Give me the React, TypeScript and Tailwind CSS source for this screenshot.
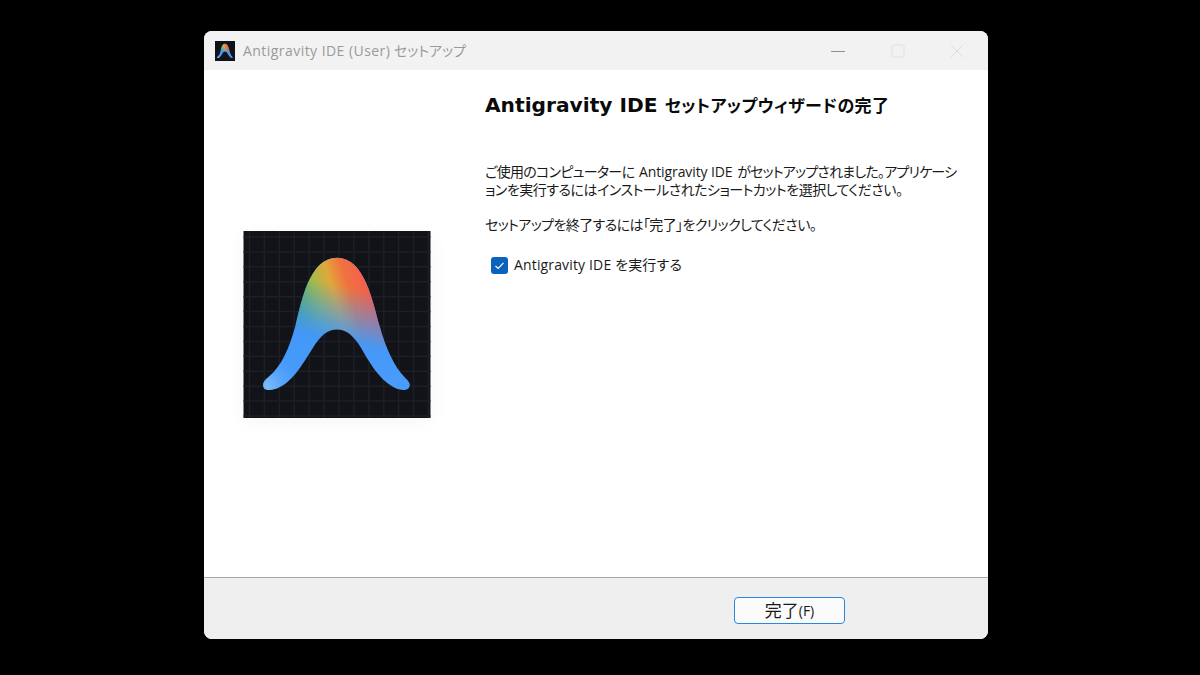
import React from "react";

const CJK = "font-['Open_Sans','Noto_Sans_CJK_JP',sans-serif] [font-feature-settings:'palt']";
const A = "M20.6 158C18 153 22 149 26 146C38 136 46 118 52 96C58 72 66 27 94 27C122 27 130 72 137 96C143 118 152 137 162 147C166 151 169 154 166 158C163 161 157 160 151 157C136 149 126 131 118 117C111 106 104 99 94 99C84 99 77 106 70 117C61 131 51 150 36 157C30 160 23 161 20.6 158Z";

function Mark({ id, grid }: { id: string; grid: boolean }) {
  const lines = [];
  if (grid) {
    for (let i = 0; i < 13; i++) {
      const p = 6 + i * 15;
      lines.push(<path key={"v" + i} d={`M${p} 0V188`} stroke="#1d1f25" strokeWidth="1.5" />);
      lines.push(<path key={"h" + i} d={`M0 ${p}H188`} stroke="#1d1f25" strokeWidth="1.5" />);
    }
  }
  return (
    <svg viewBox="0 0 188 188" className="block w-full h-full">
      <defs>
        <linearGradient id={id + "b"} x1="0" y1="0" x2="0" y2="1">
          <stop offset="0" stopColor="#3a92f2" />
          <stop offset="1" stopColor="#4a9cfb" />
        </linearGradient>
        <linearGradient id={id + "h"} gradientUnits="userSpaceOnUse" x1="52" y1="68" x2="136" y2="42">
          <stop offset="0" stopColor="#4fae66" />
          <stop offset="0.24" stopColor="#a0bb48" />
          <stop offset="0.44" stopColor="#e0a83c" />
          <stop offset="0.62" stopColor="#f0723f" />
          <stop offset="0.82" stopColor="#f4604c" />
          <stop offset="1" stopColor="#e85f6c" />
        </linearGradient>
        <linearGradient id={id + "f"} gradientUnits="userSpaceOnUse" x1="106" y1="32" x2="90" y2="110">
          <stop offset="0" stopColor="#ffffff" />
          <stop offset="0.3" stopColor="#ffffff" />
          <stop offset="1" stopColor="#000000" />
        </linearGradient>
        <mask id={id + "m"} maskUnits="userSpaceOnUse" x="0" y="0" width="188" height="188">
          <rect width="188" height="188" fill={`url(#${id}f)`} />
        </mask>
        <radialGradient id={id + "l"} gradientUnits="userSpaceOnUse" cx="24" cy="156" r="34">
          <stop offset="0" stopColor="#7fbdfb" />
          <stop offset="1" stopColor="#4a9cfb" stopOpacity="0" />
        </radialGradient>
      </defs>
      <rect width="188" height="188" fill="#121318" />
      {lines}
      <path d={A} fill={`url(#${id}b)`} />
      <path d={A} fill={`url(#${id}h)`} mask={`url(#${id}m)`} />
      <path d={A} fill={`url(#${id}l)`} />
    </svg>
  );
}

export default function App() {
  return (
    <div className="w-[1200px] h-[675px] bg-black flex pt-[31px] pl-[204px]">
      <div className={`w-[784px] h-[608px] rounded-[8px] overflow-hidden flex flex-col bg-white ${CJK}`}>
        <div className="h-[39px] bg-[#f2f2f2] flex items-center pl-[11px] shrink-0">
          <div className="w-[20px] h-[20px] shrink-0"><Mark id="s" grid={false} /></div>
          <span className="ml-[8px] text-[14px] text-[#9a9a9a] whitespace-nowrap">
            <span className="tracking-[0.45px]">Antigravity IDE (User)</span> セットアップ
          </span>
          <div className="ml-auto flex items-center pr-[24px] gap-[45.5px]">
            <svg width="14" height="14" viewBox="0 0 14 14"><path d="M0 7.5H14" stroke="#8e8e8e" strokeWidth="1" /></svg>
            <svg width="14" height="14" viewBox="0 0 14 14"><rect x="1" y="1" width="12" height="12" rx="1.5" fill="none" stroke="#e0e0e0" strokeWidth="1" /></svg>
            <svg width="14" height="14" viewBox="0 0 14 14"><path d="M1 1L13 13M13 1L1 13" stroke="#dedede" strokeWidth="1" /></svg>
          </div>
        </div>
        <div className="flex-1 flex min-h-0">
          <div className="w-[281px] shrink-0 pl-[39px] pt-[161px]">
            <div className="w-[188px] h-[187px] overflow-hidden shadow-[0_4px_20px_rgba(0,0,0,0.04)]">
              <Mark id="m" grid={true} />
            </div>
          </div>
          <div className="flex-1 pt-[22px]">
            <h1 className="text-[20.2px] leading-[26px] font-bold text-[#0a0a0a] font-['DejaVu_Sans','Noto_Sans_CJK_JP',sans-serif] whitespace-nowrap">
              Antigravity IDE <span className="text-[17px] tracking-[0.35px]">セットアップウィザードの完了</span>
            </h1>
            <p className="mt-[44px] text-[14px] leading-[18px] text-[#1a1a1a] whitespace-nowrap">
              <span className="tracking-[-0.7px]">ご使用のコンピューターに</span><span className="tracking-[1px]"> </span><span className="tracking-[-0.1px]">Antigravity IDE</span><span className="tracking-[1px]"> </span><span className="tracking-[-0.8px]">がセットアップされました。アプリケーシ</span>
              <br />
              <span className="tracking-[-0.5px]">ョンを実行するにはインストールされたショートカットを選択してください。</span>
            </p>
            <p className="mt-[17px] text-[14px] leading-[18px] text-[#1a1a1a] tracking-[-0.6px] whitespace-nowrap">
              セットアップを終了するには「完了」をクリックしてください。
            </p>
            <div className="mt-[22px] ml-[6px] flex items-center gap-[6px]">
              <span className="w-[17px] h-[17px] rounded-[3px] bg-[#0a62bd] flex items-center justify-center shrink-0">
                <svg width="11" height="11" viewBox="0 0 11 11"><path d="M1.5 6L4.2 8.5L9.5 2.8" fill="none" stroke="#ffffff" strokeWidth="1.2" /></svg>
              </span>
              <span className="text-[14px] leading-[18px] text-[#1a1a1a] tracking-[0.15px] whitespace-nowrap">Antigravity IDE を実行する</span>
            </div>
          </div>
        </div>
        <div className="h-[62px] shrink-0 bg-[#efefef] border-t border-[#a8a8a8] flex pl-[530px] pt-[19px]">
          <button className="w-[111px] h-[27px] rounded-[4px] border-[1.5px] border-[#2a88dc] bg-[#fbfbfb] text-[#1a1a1a] flex items-center justify-center leading-none">
            <span className="text-[17px]">完了</span><span className="text-[14px]">(F)</span>
          </button>
        </div>
      </div>
    </div>
  );
}
